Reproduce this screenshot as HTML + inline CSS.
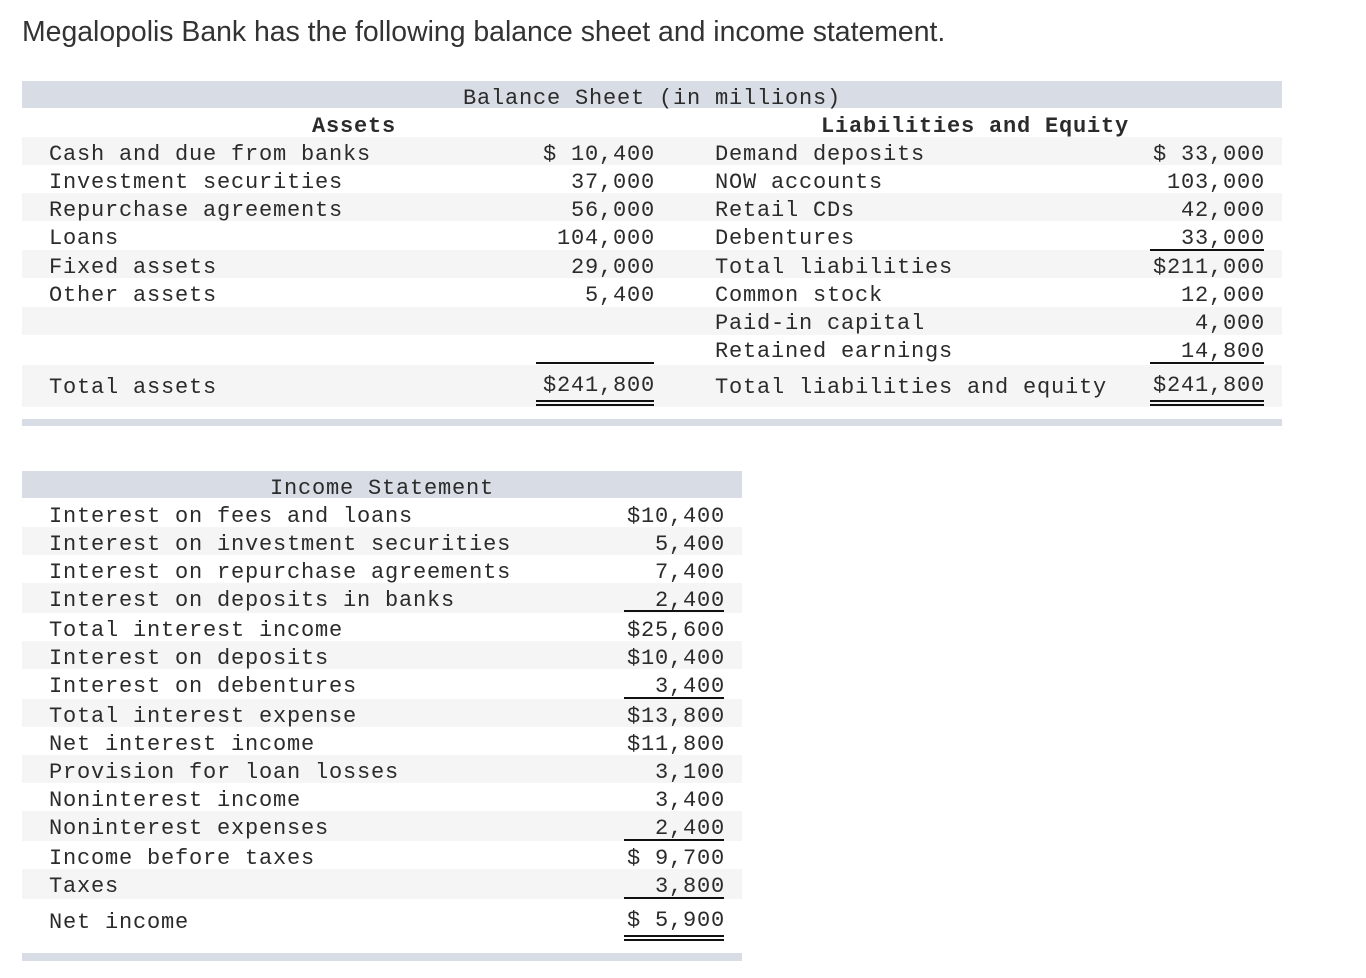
<!DOCTYPE html>
<html><head><meta charset="utf-8"><style>
*{margin:0;padding:0;box-sizing:border-box}
body{width:1366px;height:978px;background:#fff;position:relative;overflow:hidden;font-family:"Liberation Mono",monospace;color:#2b2b2b}
.t{position:absolute;font-size:22px;letter-spacing:0.8px;line-height:28px;height:28px;white-space:pre;margin-top:3px}
.r{text-align:right}
.b{font-weight:bold}
.band{position:absolute;background:#d8dce4}
.sh{position:absolute;background:#f5f5f5}
.ln{position:absolute;background:#111;height:2px}
h1{position:absolute;left:22px;top:15px;font:28.4px "Liberation Sans",sans-serif;color:#333;letter-spacing:0px;line-height:34px}
</style></head><body>
<h1>Megalopolis Bank has the following balance sheet and income statement.</h1>

<div class="band" style="left:22px;top:81px;width:1260px;height:27px"></div>
<div class="sh" style="left:22px;top:137px;width:1260px;height:28px"></div>
<div class="sh" style="left:22px;top:193px;width:1260px;height:28px"></div>
<div class="sh" style="left:22px;top:250px;width:1260px;height:28px"></div>
<div class="sh" style="left:22px;top:307px;width:1260px;height:28px"></div>
<div class="sh" style="left:22px;top:365px;width:1260px;height:42px"></div>
<div class="band" style="left:22px;top:419px;width:1260px;height:7px"></div>

<div class="t" style="left:22px;width:1260px;text-align:center;top:82px">Balance Sheet (in millions)</div>
<div class="t b" style="left:312px;top:110px">Assets</div>
<div class="t b" style="left:821px;top:110px">Liabilities and Equity</div>

<div class="t" style="left:49px;top:138px">Cash and due from banks</div>
<div class="t" style="left:49px;top:166px">Investment securities</div>
<div class="t" style="left:49px;top:194px">Repurchase agreements</div>
<div class="t" style="left:49px;top:222px">Loans</div>
<div class="t" style="left:49px;top:251px">Fixed assets</div>
<div class="t" style="left:49px;top:279px">Other assets</div>
<div class="t" style="left:49px;top:371px">Total assets</div>

<div class="t r" style="left:455px;width:200px;top:138px">$ 10,400</div>
<div class="t r" style="left:455px;width:200px;top:166px">37,000</div>
<div class="t r" style="left:455px;width:200px;top:194px">56,000</div>
<div class="t r" style="left:455px;width:200px;top:222px">104,000</div>
<div class="t r" style="left:455px;width:200px;top:251px">29,000</div>
<div class="t r" style="left:455px;width:200px;top:279px">5,400</div>
<div class="t r" style="left:455px;width:200px;top:369px">$241,800</div>
<div class="ln" style="left:536px;width:118px;top:362px"></div>
<div class="ln" style="left:536px;width:118px;top:400px"></div>
<div class="ln" style="left:536px;width:118px;top:404px"></div>

<div class="t" style="left:715px;top:138px">Demand deposits</div>
<div class="t" style="left:715px;top:166px">NOW accounts</div>
<div class="t" style="left:715px;top:194px">Retail CDs</div>
<div class="t" style="left:715px;top:222px">Debentures</div>
<div class="t" style="left:715px;top:251px">Total liabilities</div>
<div class="t" style="left:715px;top:279px">Common stock</div>
<div class="t" style="left:715px;top:307px">Paid-in capital</div>
<div class="t" style="left:715px;top:335px">Retained earnings</div>
<div class="t" style="left:715px;top:371px">Total liabilities and equity</div>

<div class="t r" style="left:1065px;width:200px;top:138px">$ 33,000</div>
<div class="t r" style="left:1065px;width:200px;top:166px">103,000</div>
<div class="t r" style="left:1065px;width:200px;top:194px">42,000</div>
<div class="t r" style="left:1065px;width:200px;top:222px">33,000</div>
<div class="t r" style="left:1065px;width:200px;top:251px">$211,000</div>
<div class="t r" style="left:1065px;width:200px;top:279px">12,000</div>
<div class="t r" style="left:1065px;width:200px;top:307px">4,000</div>
<div class="t r" style="left:1065px;width:200px;top:335px">14,800</div>
<div class="t r" style="left:1065px;width:200px;top:369px">$241,800</div>
<div class="ln" style="left:1150px;width:114px;top:249px"></div>
<div class="ln" style="left:1150px;width:114px;top:362px"></div>
<div class="ln" style="left:1150px;width:114px;top:400px"></div>
<div class="ln" style="left:1150px;width:114px;top:404px"></div>

<div class="band" style="left:22px;top:471px;width:720px;height:27px"></div>
<div class="sh" style="left:22px;top:527px;width:720px;height:28px"></div>
<div class="sh" style="left:22px;top:583px;width:720px;height:30px"></div>
<div class="sh" style="left:22px;top:641px;width:720px;height:28px"></div>
<div class="sh" style="left:22px;top:699px;width:720px;height:28px"></div>
<div class="sh" style="left:22px;top:755px;width:720px;height:28px"></div>
<div class="sh" style="left:22px;top:811px;width:720px;height:30px"></div>
<div class="sh" style="left:22px;top:869px;width:720px;height:30px"></div>
<div class="band" style="left:22px;top:953px;width:720px;height:8px"></div>

<div class="t" style="left:22px;width:720px;text-align:center;top:472px">Income Statement</div>

<div class="t" style="left:49px;top:500px">Interest on fees and loans</div>
<div class="t" style="left:49px;top:528px">Interest on investment securities</div>
<div class="t" style="left:49px;top:556px">Interest on repurchase agreements</div>
<div class="t" style="left:49px;top:584px">Interest on deposits in banks</div>
<div class="t" style="left:49px;top:614px">Total interest income</div>
<div class="t" style="left:49px;top:642px">Interest on deposits</div>
<div class="t" style="left:49px;top:670px">Interest on debentures</div>
<div class="t" style="left:49px;top:700px">Total interest expense</div>
<div class="t" style="left:49px;top:728px">Net interest income</div>
<div class="t" style="left:49px;top:756px">Provision for loan losses</div>
<div class="t" style="left:49px;top:784px">Noninterest income</div>
<div class="t" style="left:49px;top:812px">Noninterest expenses</div>
<div class="t" style="left:49px;top:842px">Income before taxes</div>
<div class="t" style="left:49px;top:870px">Taxes</div>
<div class="t" style="left:49px;top:906px">Net income</div>

<div class="t r" style="left:525px;width:200px;top:500px">$10,400</div>
<div class="t r" style="left:525px;width:200px;top:528px">5,400</div>
<div class="t r" style="left:525px;width:200px;top:556px">7,400</div>
<div class="t r" style="left:525px;width:200px;top:584px">2,400</div>
<div class="t r" style="left:525px;width:200px;top:614px">$25,600</div>
<div class="t r" style="left:525px;width:200px;top:642px">$10,400</div>
<div class="t r" style="left:525px;width:200px;top:670px">3,400</div>
<div class="t r" style="left:525px;width:200px;top:700px">$13,800</div>
<div class="t r" style="left:525px;width:200px;top:728px">$11,800</div>
<div class="t r" style="left:525px;width:200px;top:756px">3,100</div>
<div class="t r" style="left:525px;width:200px;top:784px">3,400</div>
<div class="t r" style="left:525px;width:200px;top:812px">2,400</div>
<div class="t r" style="left:525px;width:200px;top:842px">$ 9,700</div>
<div class="t r" style="left:525px;width:200px;top:870px">3,800</div>
<div class="t r" style="left:525px;width:200px;top:904px">$ 5,900</div>
<div class="ln" style="left:624px;width:100px;top:610px"></div>
<div class="ln" style="left:624px;width:100px;top:697px"></div>
<div class="ln" style="left:624px;width:100px;top:839px"></div>
<div class="ln" style="left:624px;width:100px;top:897px"></div>
<div class="ln" style="left:624px;width:100px;top:935px"></div>
<div class="ln" style="left:624px;width:100px;top:939px"></div>
</body></html>
